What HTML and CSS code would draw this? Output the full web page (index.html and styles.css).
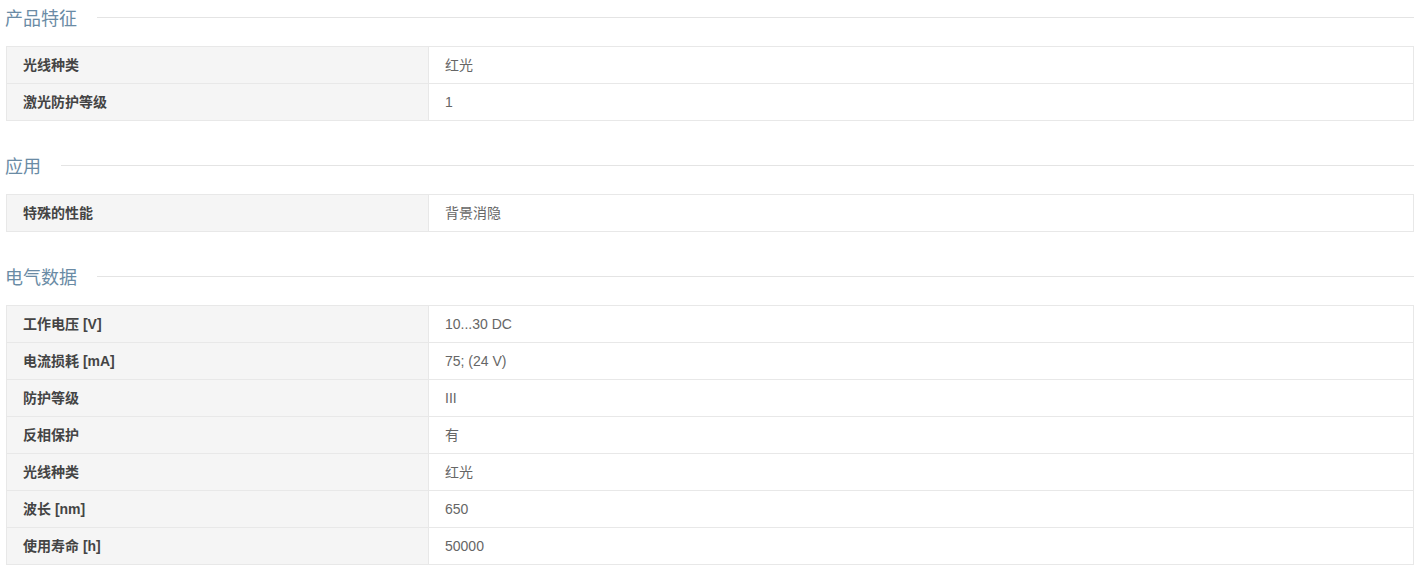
FILE: index.html
```html
<!DOCTYPE html>
<html lang="zh-CN">
<head>
  <meta charset="UTF-8">
  <title>产品参数</title>
  <link rel="stylesheet" href="styles.css">
</head>
<body>
  <div class="specs">
    <div class="section">
      <h3 class="section-title"><span>产品特征</span></h3>
      <table class="spec-table">
        <tr><th>光线种类</th><td>红光</td></tr>
        <tr><th>激光防护等级</th><td>1</td></tr>
      </table>
    </div>
    <div class="section">
      <h3 class="section-title"><span>应用</span></h3>
      <table class="spec-table">
        <tr><th>特殊的性能</th><td>背景消隐</td></tr>
      </table>
    </div>
    <div class="section">
      <h3 class="section-title"><span>电气数据</span></h3>
      <table class="spec-table">
        <tr><th>工作电压 [V]</th><td>10...30 DC</td></tr>
        <tr><th>电流损耗 [mA]</th><td>75; (24 V)</td></tr>
        <tr><th>防护等级</th><td>III</td></tr>
        <tr><th>反相保护</th><td>有</td></tr>
        <tr><th>光线种类</th><td>红光</td></tr>
        <tr><th>波长 [nm]</th><td>650</td></tr>
        <tr><th>使用寿命 [h]</th><td>50000</td></tr>
      </table>
    </div>
  </div>
</body>
</html>
```

FILE: styles.css
```css
body {
  margin: 0;
  padding: 0;
  background: #fff;
  font-family: 'Liberation Sans', 'Noto Sans CJK SC', sans-serif;
  color: #333;
}
.specs {
  padding: 0 7px 0 5px;
}
.section {
  margin-bottom: 27px;
}
.section-title {
  display: flex;
  align-items: center;
  gap: 20px;
  height: 34px;
  margin: 0 0 12px;
  font-size: 18px;
  font-weight: normal;
  color: #6a8ba5;
}
.section-title::after {
  content: '';
  flex: 1;
  height: 1px;
  background: #e4e4e4;
}
.spec-table {
  width: calc(100% - 1px);
  margin-left: 1px;
  border-collapse: collapse;
  font-size: 14px;
}
.spec-table th,
.spec-table td {
  border: 1px solid #e8e8e8;
  padding: 8px 16px;
  line-height: 20px;
  height: 20px;
  text-align: left;
}
.spec-table th {
  width: 389px;
  background: #f5f5f5;
  font-weight: bold;
  color: #444;
}
.spec-table td {
  color: #666;
}
```
